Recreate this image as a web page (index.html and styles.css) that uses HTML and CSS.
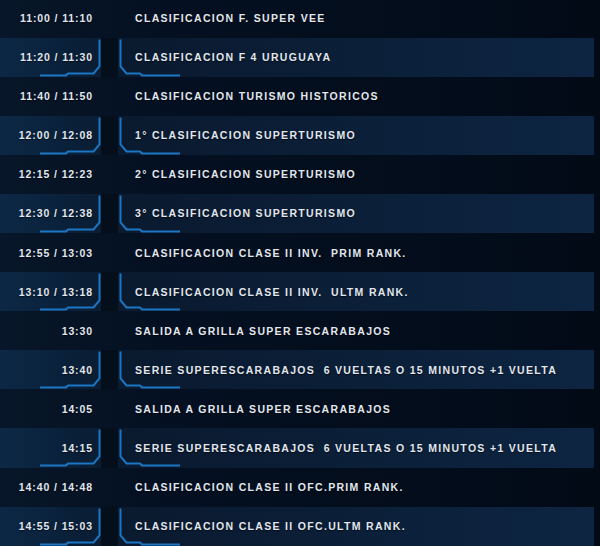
FILE: index.html
```html
<!DOCTYPE html>
<html lang="es">
<head>
<meta charset="utf-8">
<title>Cronograma</title>
<link rel="stylesheet" href="styles.css">
</head>
<body>
<div class="schedule">
  <div class="row"><div class="time">11:00 / 11:10</div><div class="sep"></div><div class="event">CLASIFICACION F. SUPER VEE</div></div>
  <div class="row hl"><div class="time">11:20 / 11:30<svg class="bl" width="62" height="39" viewBox="0 0 62 39"><path d="M60.5 1.5V28.5L54.5 35.5H29L27 37.5H1"/></svg></div><div class="sep"></div><div class="event"><svg class="br" width="64" height="39" viewBox="0 0 64 39"><path d="M2.5 1.5V28.5L8.5 35.5H22L24 37.5H62"/></svg>CLASIFICACION F 4 URUGUAYA</div></div>
  <div class="row"><div class="time">11:40 / 11:50</div><div class="sep"></div><div class="event">CLASIFICACION TURISMO HISTORICOS</div></div>
  <div class="row hl"><div class="time">12:00 / 12:08<svg class="bl" width="62" height="39" viewBox="0 0 62 39"><path d="M60.5 1.5V28.5L54.5 35.5H29L27 37.5H1"/></svg></div><div class="sep"></div><div class="event"><svg class="br" width="64" height="39" viewBox="0 0 64 39"><path d="M2.5 1.5V28.5L8.5 35.5H22L24 37.5H62"/></svg>1° CLASIFICACION SUPERTURISMO</div></div>
  <div class="row"><div class="time">12:15 / 12:23</div><div class="sep"></div><div class="event">2° CLASIFICACION SUPERTURISMO</div></div>
  <div class="row hl"><div class="time">12:30 / 12:38<svg class="bl" width="62" height="39" viewBox="0 0 62 39"><path d="M60.5 1.5V28.5L54.5 35.5H29L27 37.5H1"/></svg></div><div class="sep"></div><div class="event"><svg class="br" width="64" height="39" viewBox="0 0 64 39"><path d="M2.5 1.5V28.5L8.5 35.5H22L24 37.5H62"/></svg>3° CLASIFICACION SUPERTURISMO</div></div>
  <div class="row"><div class="time">12:55 / 13:03</div><div class="sep"></div><div class="event">CLASIFICACION CLASE II INV.  PRIM RANK.</div></div>
  <div class="row hl"><div class="time">13:10 / 13:18<svg class="bl" width="62" height="39" viewBox="0 0 62 39"><path d="M60.5 1.5V28.5L54.5 35.5H29L27 37.5H1"/></svg></div><div class="sep"></div><div class="event"><svg class="br" width="64" height="39" viewBox="0 0 64 39"><path d="M2.5 1.5V28.5L8.5 35.5H22L24 37.5H62"/></svg>CLASIFICACION CLASE II INV.  ULTM RANK.</div></div>
  <div class="row"><div class="time">13:30</div><div class="sep"></div><div class="event">SALIDA A GRILLA SUPER ESCARABAJOS</div></div>
  <div class="row hl"><div class="time">13:40<svg class="bl" width="62" height="39" viewBox="0 0 62 39"><path d="M60.5 1.5V28.5L54.5 35.5H29L27 37.5H1"/></svg></div><div class="sep"></div><div class="event"><svg class="br" width="64" height="39" viewBox="0 0 64 39"><path d="M2.5 1.5V28.5L8.5 35.5H22L24 37.5H62"/></svg>SERIE SUPERESCARABAJOS  6 VUELTAS O 15 MINUTOS +1 VUELTA</div></div>
  <div class="row"><div class="time">14:05</div><div class="sep"></div><div class="event">SALIDA A GRILLA SUPER ESCARABAJOS</div></div>
  <div class="row hl"><div class="time">14:15<svg class="bl" width="62" height="39" viewBox="0 0 62 39"><path d="M60.5 1.5V28.5L54.5 35.5H29L27 37.5H1"/></svg></div><div class="sep"></div><div class="event"><svg class="br" width="64" height="39" viewBox="0 0 64 39"><path d="M2.5 1.5V28.5L8.5 35.5H22L24 37.5H62"/></svg>SERIE SUPERESCARABAJOS  6 VUELTAS O 15 MINUTOS +1 VUELTA</div></div>
  <div class="row"><div class="time">14:40 / 14:48</div><div class="sep"></div><div class="event">CLASIFICACION CLASE II OFC.PRIM RANK.</div></div>
  <div class="row hl"><div class="time">14:55 / 15:03<svg class="bl" width="62" height="39" viewBox="0 0 62 39"><path d="M60.5 1.5V28.5L54.5 35.5H29L27 37.5H1"/></svg></div><div class="sep"></div><div class="event"><svg class="br" width="64" height="39" viewBox="0 0 64 39"><path d="M2.5 1.5V28.5L8.5 35.5H22L24 37.5H62"/></svg>CLASIFICACION CLASE II OFC.ULTM RANK.</div></div>
</div>
</body>
</html>
```

FILE: styles.css
```css
html, body {
  margin: 0;
  padding: 0;
}
body {
  width: 600px;
  height: 546px;
  overflow: hidden;
  background: linear-gradient(90deg, #071628 0%, #041021 30%, #020a16 100%);
  font-family: "Liberation Sans", Arial, sans-serif;
  font-weight: bold;
  font-size: 10.5px;
  color: #e1e7ee;
}
.schedule {
  display: flex;
  flex-direction: column;
  margin-top: -1.6px;
}
.row {
  display: flex;
  height: 39.1px;
  align-items: stretch;
  white-space: pre;
  text-shadow: 0 1px 1px rgba(0, 0, 0, 0.6);
}
.time {
  position: relative;
  width: 101px;
  padding-right: 8px;
  box-sizing: border-box;
  display: flex;
  align-items: center;
  justify-content: flex-end;
  letter-spacing: 0.9px;
}
.sep {
  width: 17px;
}
.event {
  position: relative;
  flex: 1;
  margin-right: 6px;
  padding-left: 17px;
  display: flex;
  align-items: center;
  letter-spacing: 1.32px;
}
.hl .time {
  background: linear-gradient(90deg, #0c2846 0%, #0a213b 60%, #0a1d33 100%);
}
.hl .sep {
  background: #050f1c;
}
.hl .event {
  background: linear-gradient(90deg, #0a1a2f 0%, #0b1f38 50%, #0d2542 100%);
}
.bl, .br {
  position: absolute;
  top: 0;
}
.bl {
  right: 0;
}
.br {
  left: 0;
}
.bl path, .br path {
  fill: none;
  stroke: #1b76c4;
  stroke-width: 2;
}
```
